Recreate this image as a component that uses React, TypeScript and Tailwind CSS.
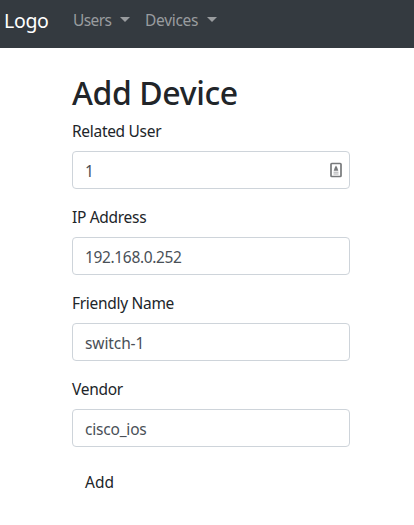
import React from "react";

type FieldProps = {
  label: string;
  labelClass: string;
  value: string;
  valueClass: string;
  contact?: boolean;
};

function ContactIcon() {
  return (
    <svg className="h-4 w-3" viewBox="0 0 12 16" fill="none">
      <rect x="1" y="1.5" width="10" height="13" rx="0.8" stroke="#77797b" strokeWidth="1.7" />
      <path d="M6 3.6 7.3 5.8 8.3 8.7H3.7L4.7 5.8Z" fill="#77797b" />
      <path d="M3.5 10.2h5M3.5 12h5" stroke="#a1a3a5" strokeWidth="0.9" />
    </svg>
  );
}

function Field({ label, labelClass, value, valueClass, contact }: FieldProps) {
  return (
    <div className="mb-4">
      <div className="mb-2 flex h-6 items-center">
        <span className={labelClass}>{label}</span>
      </div>
      <div className="flex h-[38px] items-center justify-between rounded border border-[#ced4da] bg-white pr-[7px] pl-3 text-[#495057]">
        <span className={`pt-0.5 ${valueClass}`}>{value}</span>
        {contact && <ContactIcon />}
      </div>
    </div>
  );
}

function Caret() {
  return <span className="-mt-0.5 border-x-[5px] border-t-[5px] border-x-transparent border-t-[#999c9f]" />;
}

export default function App() {
  return (
    <div className="h-[525px] w-[414px] overflow-hidden bg-white font-['Noto_Sans','Open_Sans',sans-serif] text-[15.5px] leading-6 text-[#212529]">
      <nav className="flex h-12 items-center bg-[#343a40] pb-2 pl-1 text-[#999c9f]">
        <span className="w-[69px] pt-px text-[19.5px] tracking-[-0.3px] text-white">Logo</span>
        <div className="flex w-[72px] items-center gap-[9px]">
          <span className="tracking-[-0.6px]">Users</span>
          <Caret />
        </div>
        <div className="flex items-center gap-[9px]">
          <span className="tracking-[-0.3px]">Devices</span>
          <Caret />
        </div>
      </nav>
      <main className="ml-[72px] w-[278px] pt-[26px]">
        <h1 className="mb-[7px] text-[32px] leading-[38px] font-medium tracking-[-0.4px] whitespace-nowrap">Add Device</h1>
        <Field label="Related User" labelClass="tracking-[-0.3px]" value="1" valueClass="" contact />
        <Field label="IP Address" labelClass="tracking-[-0.3px]" value="192.168.0.252" valueClass="tracking-[-0.35px]" />
        <Field label="Friendly Name" labelClass="tracking-[-0.3px]" value="switch-1" valueClass="tracking-[-0.1px]" />
        <Field label="Vendor" labelClass="tracking-[-0.3px]" value="cisco_ios" valueClass="tracking-[-0.2px]" />
        <button className="mt-[7px] px-[13px] tracking-[0px]">Add</button>
      </main>
    </div>
  );
}
